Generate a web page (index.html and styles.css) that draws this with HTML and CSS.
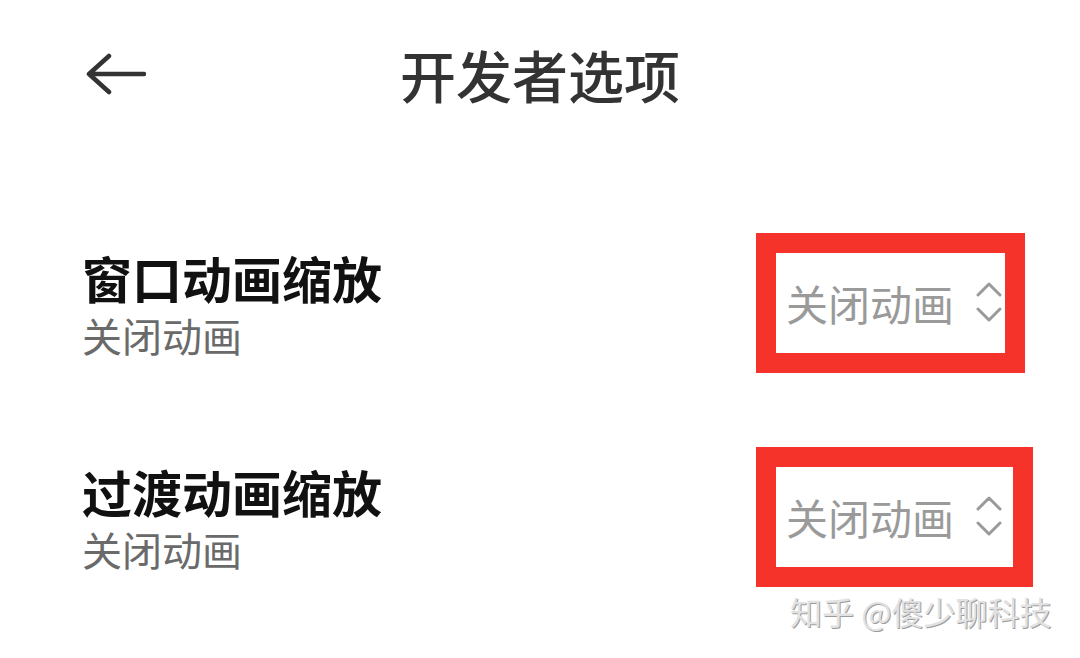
FILE: index.html
```html
<!DOCTYPE html>
<html>
    <head>
        <title>开发者选项</title>
        <meta name="viewport" content="width=device-width, initial-scale=1">
        <link rel="stylesheet" href="styles.css">
    </head>
    <body>
        <header class="top-bar">
            <button class="back-btn" aria-label="返回">
                <svg width="60" height="42" viewBox="0 0 60 42">
                    <path d="M3 21 H58 M23 3 L3 21 L23 39" fill="none" stroke="#333" stroke-width="4.5" stroke-linecap="round" stroke-linejoin="round"/>
                </svg>
            </button>
            <h1 class="page-title">开发者选项</h1>
            <span></span>
        </header>

        <ul class="settings">
            <li class="setting-row">
                <div class="setting-text">
                    <div class="setting-name">窗口动画缩放</div>
                    <div class="setting-summary">关闭动画</div>
                </div>
                <div class="picker-mark">
                    <span class="picker-value">关闭动画</span>
                    <svg class="picker-arrows" width="26" height="42" viewBox="0 0 26 42">
                        <path d="M2 14 L13 3 L24 14 M2 28 L13 39 L24 28" fill="none" stroke="#9a9a9a" stroke-width="3" stroke-linecap="round" stroke-linejoin="round"/>
                    </svg>
                </div>
            </li>
            <li class="setting-row">
                <div class="setting-text">
                    <div class="setting-name">过渡动画缩放</div>
                    <div class="setting-summary">关闭动画</div>
                </div>
                <div class="picker-mark picker-mark-wide">
                    <span class="picker-value">关闭动画</span>
                    <svg class="picker-arrows" width="26" height="42" viewBox="0 0 26 42">
                        <path d="M2 14 L13 3 L24 14 M2 28 L13 39 L24 28" fill="none" stroke="#9a9a9a" stroke-width="3" stroke-linecap="round" stroke-linejoin="round"/>
                    </svg>
                </div>
            </li>
        </ul>

        <div class="watermark">知乎 @傻少聊科技</div>
    </body>
</html>
```

FILE: styles.css
```css
html, body {
    margin: 0;
    height: 100%;
    background-color: white;
    font-family: "Noto Sans CJK SC", "Noto Sans", sans-serif;
}

body {
    position: relative;
    overflow: hidden;
}

.top-bar {
    height: 147px;
    display: grid;
    grid-template-columns: 1fr auto 1fr;
    align-items: center;
}

.back-btn {
    justify-self: start;
    margin-left: 86px;
    padding: 0;
    border: none;
    background: none;
    display: flex;
    cursor: pointer;
}

.page-title {
    margin: 0;
    font-size: 56px;
    font-weight: 500;
    line-height: 1;
    color: #333;
}

.settings {
    list-style: none;
    margin: 49px 0 0;
    padding: 0;
}

.setting-row {
    height: 214px;
    display: grid;
    grid-template-columns: 674px auto;
    align-items: center;
    padding-left: 82px;
}

.setting-name {
    font-size: 50px;
    font-weight: bold;
    line-height: 54px;
    color: #111;
}

.setting-summary {
    margin-top: 9px;
    font-size: 40px;
    line-height: 44px;
    color: #6a6a6a;
}

.picker-mark {
    justify-self: start;
    box-sizing: border-box;
    height: 140px;
    border: 20px solid #f5332b;
    padding: 0 3px 0 10px;
    display: flex;
    align-items: center;
    gap: 22px;
}

.picker-mark-wide {
    padding-right: 11px;
}

.picker-value {
    font-size: 42px;
    line-height: 1;
    color: #9a9a9a;
}

.picker-arrows {
    margin-top: -2px;
}

.watermark {
    position: absolute;
    left: 790px;
    top: 595px;
    font-size: 32px;
    line-height: 1;
    color: #e2e2e2;
    text-shadow: 1px 1px 0 #9c9c9c;
    white-space: nowrap;
}
```
